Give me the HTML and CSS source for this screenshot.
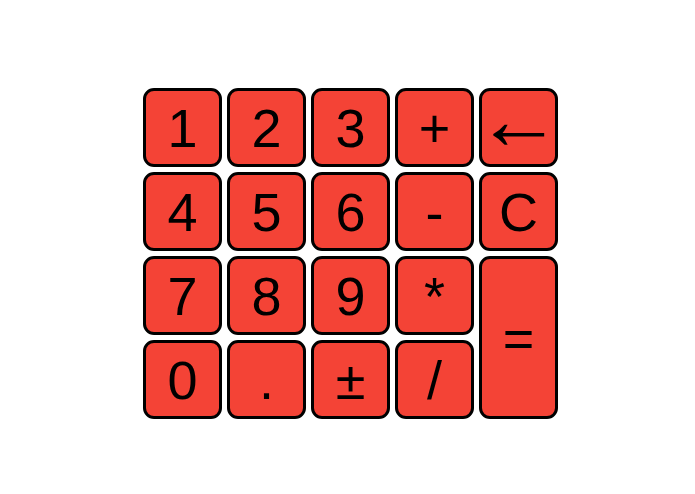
FILE: index.html
```html
<!DOCTYPE html>
<html lang="en">
<head>
  <meta charset="UTF-8" />
  <meta name="viewport" content="width=device-width, initial-scale=1.0" />
  <title>Keypad</title>
  <link rel="stylesheet" href="styles.css">
</head>
<body>
  <div class="keypad">
    <button class="key">1</button>
    <button class="key">2</button>
    <button class="key">3</button>
    <button class="key">+</button>
    <button class="key back">&larr;</button>

    <button class="key">4</button>
    <button class="key">5</button>
    <button class="key">6</button>
    <button class="key">-</button>
    <button class="key">C</button>

    <button class="key">7</button>
    <button class="key">8</button>
    <button class="key">9</button>
    <button class="key">*</button>
    <button class="key equals">=</button>

    <button class="key">0</button>
    <button class="key">.</button>
    <button class="key">&plusmn;</button>
    <button class="key">/</button>
  </div>
</body>
</html>
```

FILE: styles.css
```css
body { margin: 0; background: #fff; font-family: "Liberation Sans", Arial, sans-serif; }
.keypad {
  display: grid;
  grid-template-columns: repeat(5, 79px);
  grid-template-rows: repeat(4, 79px);
  gap: 5px;
  width: max-content;
  margin: 88px 0 0 143px;
}
.key {
  background: #f44336;
  border: 3px solid #000;
  border-radius: 11px;
  font-family: inherit;
  font-size: 54px;
  color: #000;
  padding: 0;
  line-height: 1;
  display: flex;
  align-items: center;
  justify-content: center;
}
/* the arrow glyph is tiny at the normal size, so it gets its own */
.back { font-size: 86px; padding-bottom: 18px; }
.equals { grid-column: 5; grid-row: 3 / span 2; }
```
